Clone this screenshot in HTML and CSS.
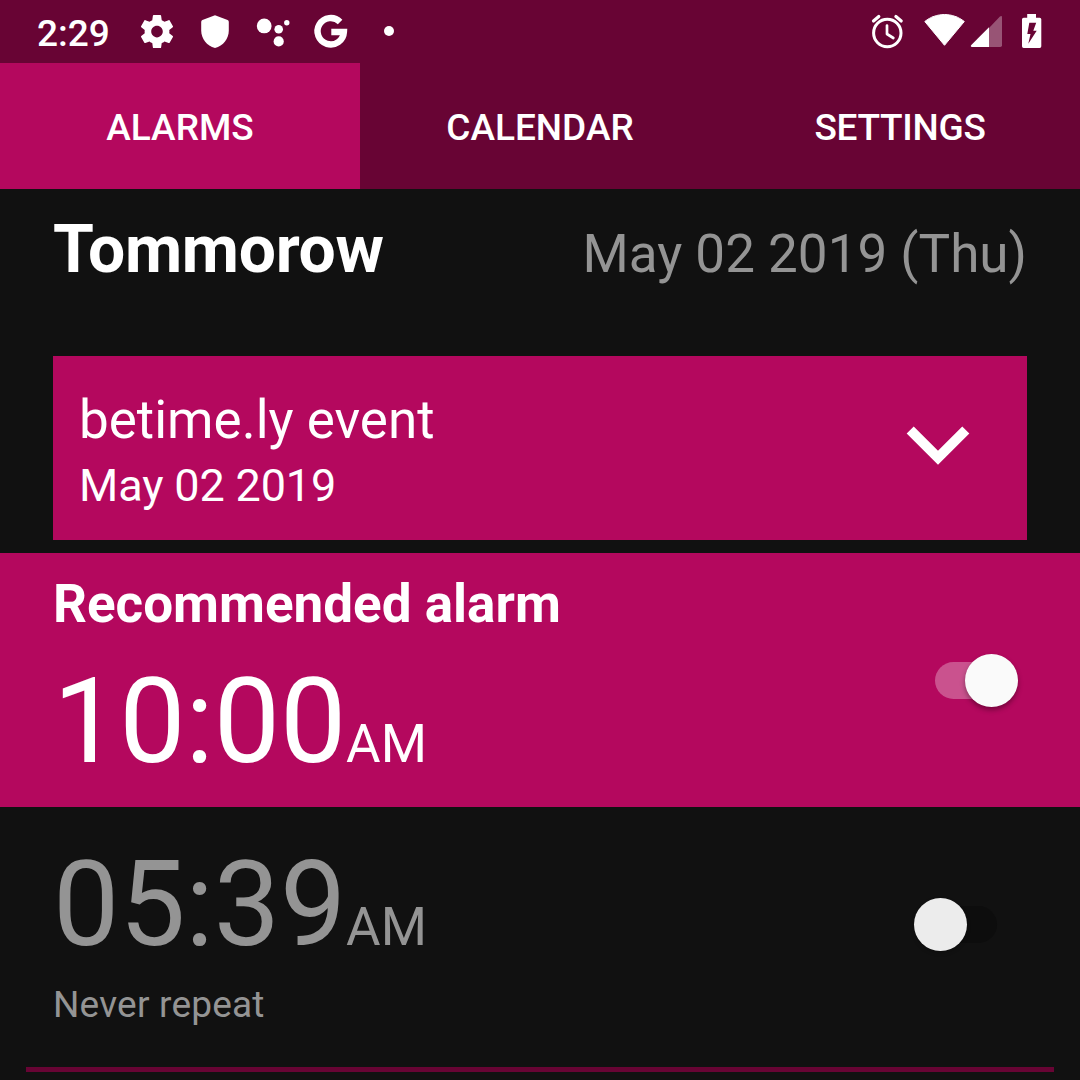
FILE: index.html
```html
<!DOCTYPE html>
<html lang="en">
<head>
<meta charset="utf-8">
<title>Alarms</title>
<link rel="stylesheet" href="styles.css">
</head>
<body>
<header class="status">
  <span class="clock">2:29</span>
  <div class="notifications">
    <svg width="40" height="63" viewBox="0 0 40 63"><path fill="#fff" transform="translate(.2 11.8) scale(1.65)" d="M19.43 12.98c.04-.32.07-.64.07-.98s-.03-.66-.07-.98l2.11-1.65c.19-.15.24-.42.12-.64l-2-3.46c-.12-.22-.39-.3-.61-.22l-2.49 1c-.52-.4-1.08-.73-1.69-.98l-.38-2.65C14.46 2.18 14.25 2 14 2h-4c-.25 0-.46.18-.49.42l-.38 2.65c-.61.25-1.17.59-1.69.98l-2.49-1c-.23-.09-.49 0-.61.22l-2 3.46c-.13.22-.07.49.12.64l2.11 1.65c-.04.32-.07.65-.07.98s.03.66.07.98l-2.11 1.65c-.19.15-.24.42-.12.64l2 3.46c.12.22.39.3.61.22l2.49-1c.52.4 1.08.73 1.69.98l.38 2.65c.03.24.24.42.49.42h4c.25 0 .46-.18.49-.42l.38-2.65c.61-.25 1.17-.59 1.69-.98l2.49 1c.23.09.49 0 .61-.22l2-3.46c.12-.22.07-.49-.12-.64l-2.11-1.65zM12 15.5c-1.93 0-3.5-1.57-3.5-3.5s1.57-3.5 3.5-3.5 3.5 1.57 3.5 3.5-1.57 3.5-3.5 3.5z"/></svg>
    <svg width="40" height="63" viewBox="0 0 40 63"><path fill="#fff" d="M20 15.2 32.6 20q1.2.5 1.2 2v8.500c0 8-5.500 15.500-13.800 17.500C11.700 46 6.200 38.500 6.200 30.500V22q0-1.500 1.200-2z"/></svg>
    <svg width="40" height="63" viewBox="0 0 40 63"><g fill="#fff"><circle cx="11.200" cy="25.900" r="7.400"/><circle cx="25.700" cy="29.300" r="4.300"/><circle cx="25.700" cy="41.400" r="5.100"/><circle cx="33.800" cy="22.700" r="2.700"/></g></svg>
    <svg width="40" height="63" viewBox="0 0 40 63"><path fill="none" stroke="#fff" stroke-width="6.400" d="M29.100 22A13.200 13.200 0 1 0 32.900 32H20.300"/></svg>
    <svg width="40" height="63" viewBox="0 0 40 63"><circle cx="20" cy="31" r="5" fill="#fff"/></svg>
  </div>
  <div class="system">
    <svg class="alarm-icon" width="40" height="63" viewBox="0 0 40 63"><g fill="none" stroke="#fff"><circle cx="20.300" cy="33" r="13.700" stroke-width="3"/><path stroke-width="2.700" stroke-linejoin="round" stroke-linecap="round" d="M20 25.500V34l6.300 4"/><path stroke-width="3.200" stroke-linecap="round" d="m6.500 21 5.300-4.500M34.200 21l-5.300-4.500"/></g></svg>
    <svg class="wifi-icon" width="42" height="63" viewBox="0 0 42 63"><path fill="#fff" stroke="#fff" stroke-width="1" stroke-linejoin="round" d="M.8 21.500C12.500 12.200 28.500 12.200 40.300 21.500L20.500 45.300z"/></svg>
    <svg class="signal-icon" width="32" height="63" viewBox="0 0 32 63"><path fill="#fff" fill-opacity=".32" d="M19 28 29.700 16.800Q32 15 32 17.500V45.300q0 1.700-1.700 1.700H19z"/><path fill="#fff" d="M19 27.300V47H2q-2-.3-.7-2z"/></svg>
    <svg width="20" height="63" viewBox="0 0 20 63"><path fill="#fff" fill-rule="evenodd" d="M5.200 14H14v3.700h3.700q1.600 0 1.600 1.600v27q0 1.700-1.600 1.700H1.700Q0 48 0 46.300v-27q0-1.600 1.700-1.600h3.500zM7.300 22.700 5.300 34H8.500L6.300 43.700 14.700 30.700H11.300L14.200 22.700z"/></svg>
  </div>
</header>
<nav class="tabs">
  <div class="tab active">ALARMS</div>
  <div class="tab">CALENDAR</div>
  <div class="tab tab-settings">SETTINGS</div>
</nav>
<main>
  <section class="day">
    <h1 class="day-name">Tommorow</h1>
    <span class="date">May 02 2019 (Thu)</span>
  </section>
  <section class="event">
    <div>
      <div class="event-name">betime.ly event</div>
      <div class="event-date">May 02 2019</div>
    </div>
    <svg class="chevron" width="64" height="40" viewBox="0 0 64 40"><path fill="none" stroke="#fff" stroke-width="10" d="M4.200 4 32 31.700 59.800 4"/></svg>
  </section>
  <section class="alarm recommended">
    <div>
      <h2 class="alarm-title">Recommended alarm</h2>
      <div class="time">10:00<span class="period">AM</span></div>
    </div>
    <div class="switch on"><div class="knob"></div></div>
  </section>
  <section class="alarm regular">
    <div>
      <div class="time">05:39<span class="period">AM</span></div>
      <div class="repeat">Never repeat</div>
    </div>
    <div class="switch off"><div class="knob"></div></div>
  </section>
  <hr class="divider">
</main>
</body>
</html>
```
FILE: styles.css
```css
* { box-sizing: border-box; }
body {
  margin: 0;
  width: 1080px;
  height: 1080px;
  overflow: hidden;
  background: #111;
  color: #fff;
  font-family: Roboto, sans-serif;
}
svg { display: block; flex: none; }
h1, h2 { margin: 0; }
.status {
  display: flex;
  height: 63px;
  padding: 0 38px 0 37px;
  background: #680434;
}
.clock {
  width: 100px;
  font-size: 37px;
  font-weight: 500;
  line-height: 67px;
}
.notifications { display: flex; gap: 18px; }
.system { display: flex; margin-left: auto; }
.alarm-icon { margin-right: 17px; }
.wifi-icon { margin-right: 4px; }
.signal-icon { margin-right: 20px; }
.tabs {
  display: grid;
  grid-template-columns: repeat(3, 1fr);
  height: 126px;
  background: #680434;
}
.tab {
  height: 126px;
  font-size: 37px;
  font-weight: 500;
  line-height: 129px;
  text-align: center;
}
.tab-settings { letter-spacing: -.3px; }
.active { background: #b4085e; }
.day {
  display: flex;
  justify-content: space-between;
  align-items: baseline;
  height: 167px;
  padding: 22px 53px 0;
}
.day-name { font-size: 66px; line-height: 77px; letter-spacing: -.3px; }
.date { color: #949494; font-size: 53px; line-height: 62px; }
.event {
  display: flex;
  justify-content: space-between;
  height: 184px;
  margin: 0 53px 13px;
  padding: 33px 57px 0 26px;
  background: #b4085e;
}
.event-name { font-size: 53px; line-height: 62px; }
.event-date { margin-top: 8px; font-size: 45px; line-height: 53px; letter-spacing: -.15px; }
.chevron { margin-top: 37px; }
.alarm { display: flex; justify-content: space-between; }
.recommended {
  height: 254px;
  padding: 20px 62px 0 53px;
  background: #b4085e;
}
.alarm-title { font-size: 53px; line-height: 62px; }
.time { margin-top: 18px; font-size: 118px; line-height: 138px; letter-spacing: -.15px; }
.period { font-size: 53px; line-height: 0; letter-spacing: 0; }
.regular {
  height: 260px;
  padding: 11px 83px 0 53px;
  color: #949494;
}
.repeat { margin-top: 9px; font-size: 37px; line-height: 43px; letter-spacing: .2px; }
.switch {
  display: flex;
  align-items: center;
  width: 83px;
  height: 37px;
  border-radius: 19px;
}
.on { justify-content: flex-end; margin-top: 89px; background: rgba(255, 255, 255, .3); }
.off { margin-top: 88px; background: #0d0d0d; }
.knob {
  flex: none;
  width: 53px;
  height: 53px;
  border-radius: 50%;
  background: #fafafa;
  box-shadow: 0 3px 5px rgba(0, 0, 0, .35);
}
.off .knob { background: #ececec; box-shadow: 0 2px 4px rgba(0, 0, 0, .2); }
.divider { height: 5px; margin: 0 26px; border: 0; background: #680434; }
```
